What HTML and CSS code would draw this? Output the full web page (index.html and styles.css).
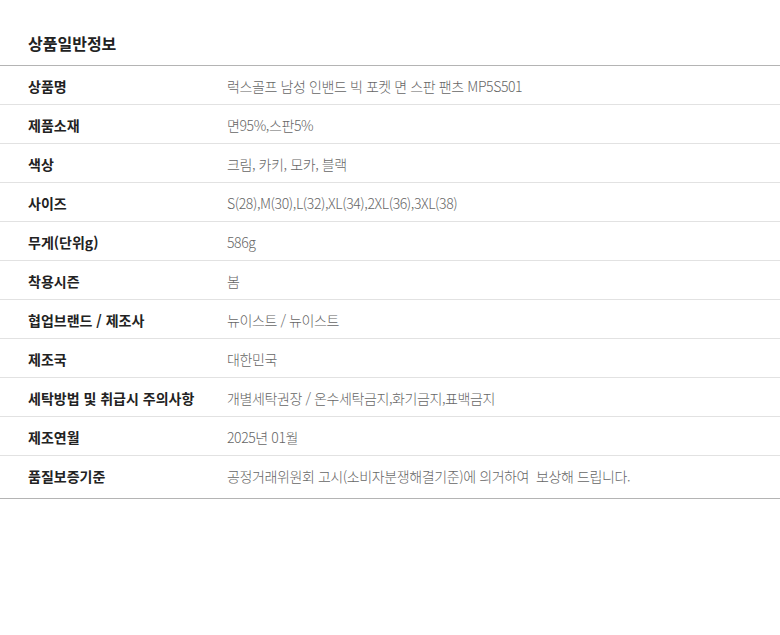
FILE: index.html
```html
<!DOCTYPE html>
<html lang="ko">
<head>
<meta charset="utf-8">
<link rel="stylesheet" href="styles.css">
</head>
<body>
<div class="info">
  <h2 class="title">상품일반정보</h2>
  <div class="table">
    <div class="row"><div class="label">상품명</div><div class="value">럭스골프 남성 인밴드 빅 포켓 면 스판 팬츠 MP5S501</div></div>
    <div class="row"><div class="label">제품소재</div><div class="value">면95%,스판5%</div></div>
    <div class="row"><div class="label">색상</div><div class="value">크림, 카키, 모카, 블랙</div></div>
    <div class="row"><div class="label">사이즈</div><div class="value">S(28),M(30),L(32),XL(34),2XL(36),3XL(38)</div></div>
    <div class="row"><div class="label">무게(단위g)</div><div class="value">586g</div></div>
    <div class="row"><div class="label">착용시즌</div><div class="value">봄</div></div>
    <div class="row"><div class="label">협업브랜드 / 제조사</div><div class="value">뉴이스트 / 뉴이스트</div></div>
    <div class="row"><div class="label">제조국</div><div class="value">대한민국</div></div>
    <div class="row"><div class="label">세탁방법 및 취급시 주의사항</div><div class="value">개별세탁권장 / 온수세탁금지,화기금지,표백금지</div></div>
    <div class="row"><div class="label">제조연월</div><div class="value">2025년 01월</div></div>
    <div class="row last"><div class="label">품질보증기준</div><div class="value">공정거래위원회 고시(소비자분쟁해결기준)에 의거하여&nbsp; 보상해 드립니다.</div></div>
  </div>
</div>
</body>
</html>
```
FILE: styles.css
```css
html, body {
  margin: 0;
  padding: 0;
  background: #fff;
}
body {
  font-family: "Noto Sans CJK KR", "Noto Sans", sans-serif;
}
.info {
  padding-top: 31px;
}
.title {
  margin: 0;
  padding: 0 0 10px 28px;
  font-size: 16px;
  line-height: 24px;
  font-weight: 700;
  color: #222;
}
.table {
  border-top: 1px solid #b4b4b4;
  border-bottom: 1px solid #b4b4b4;
}
.row {
  box-sizing: border-box;
  display: grid;
  grid-template-columns: 199px 1fr;
  align-items: center;
  height: 39px;
  padding: 2px 0 0 28px;
  border-bottom: 1px solid #e2e2e2;
}
.row.last {
  border-bottom: none;
  height: 42px;
  padding-bottom: 4px;
}
.label {
  font-size: 14px;
  font-weight: 700;
  color: #222;
}
.value {
  font-size: 14px;
  font-weight: 300;
  letter-spacing: -0.4px;
  color: #666;
}
```
